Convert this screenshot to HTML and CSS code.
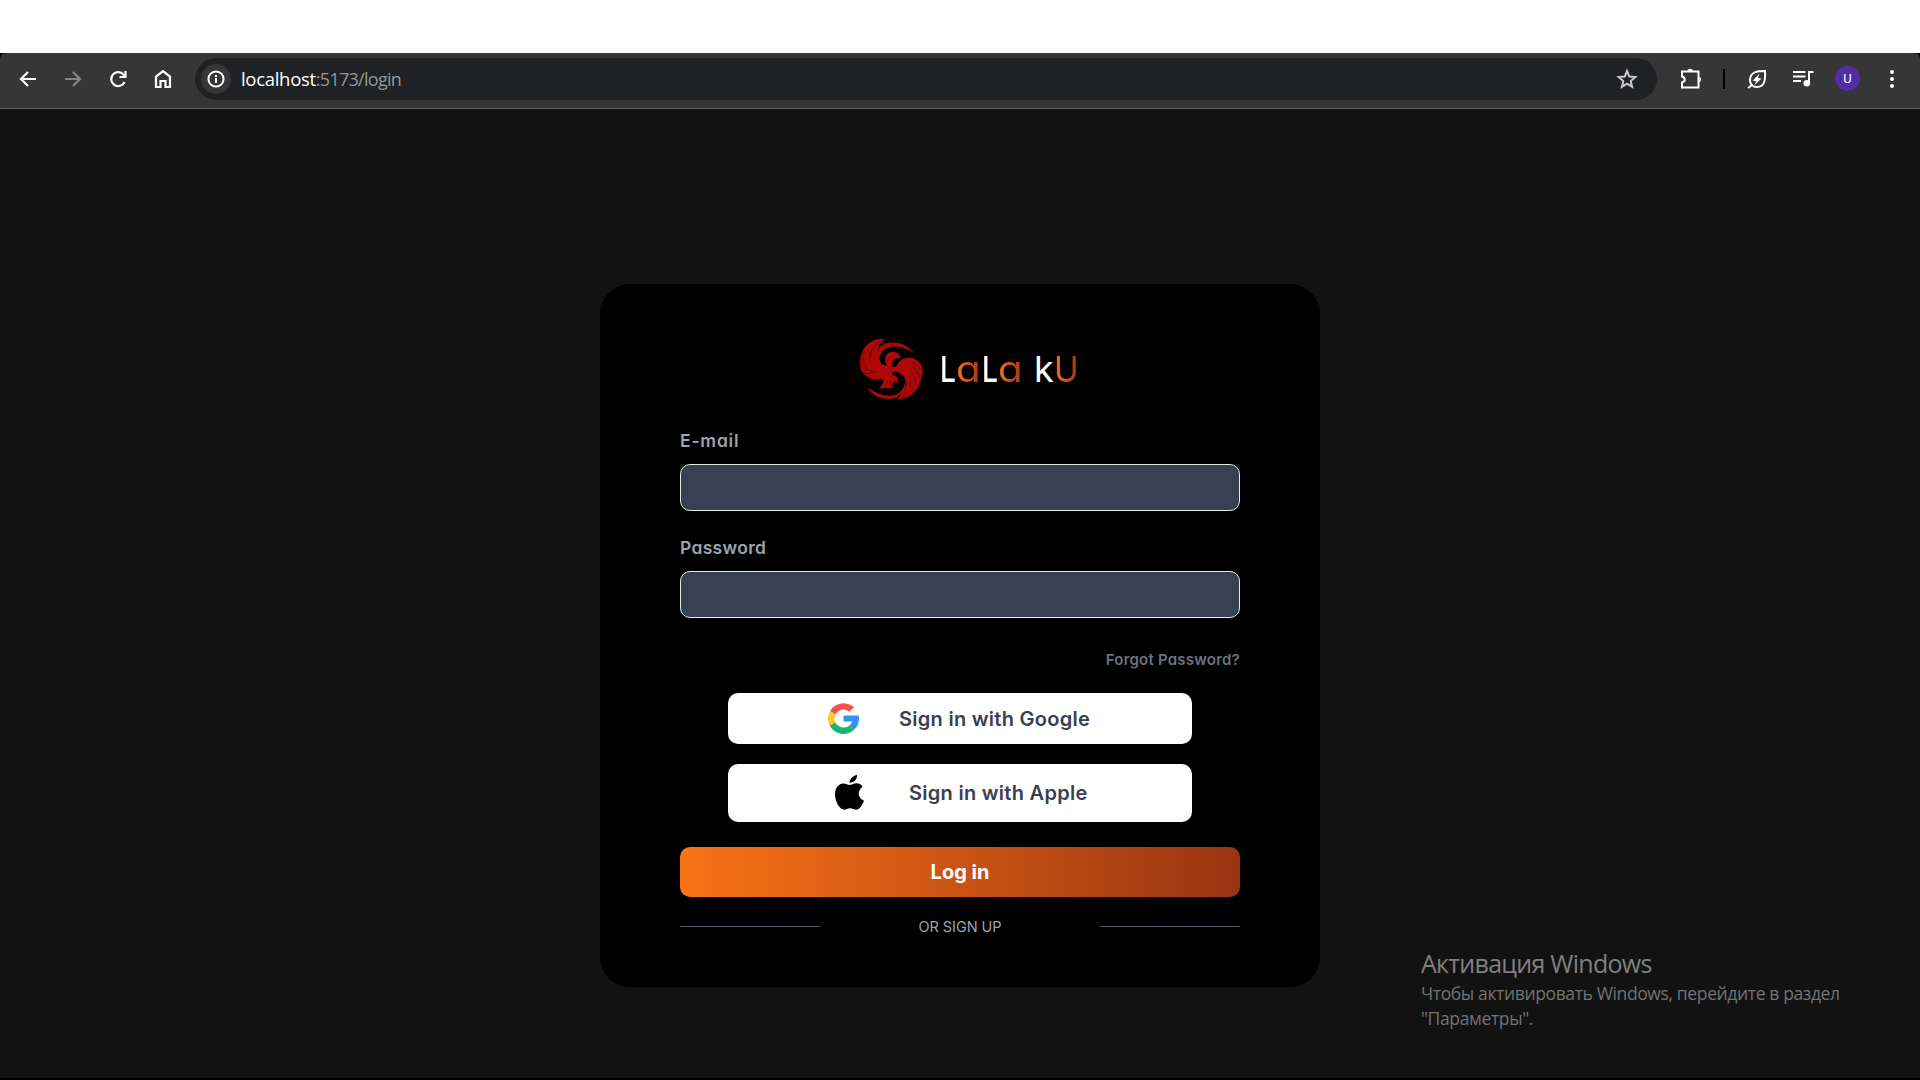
FILE: index.html
```html
<!DOCTYPE html>
<html lang="en">
<head>
<meta charset="utf-8">
<title>Login</title>
<link rel="stylesheet" href="styles.css">
</head>
<body>
<div class="window">
  <header class="toolbar">
    <nav class="nav">
      <svg class="icon" viewBox="0 0 24 24"><path d="M20 12H5M12 5l-7 7 7 7"/></svg>
      <svg class="icon dim" viewBox="0 0 24 24"><path d="M4 12h15M12 5l7 7-7 7"/></svg>
      <svg class="icon" viewBox="0 0 24 24"><path d="M18.6 15A7 7 0 1 1 17.5 7.500L19 9M19.500 4v6h-6"/></svg>
      <svg class="icon" viewBox="0 0 24 24"><path d="M5 20V9.500L12 4.200l7 5.300V20h-4.500v-6h-5v6z"/></svg>
    </nav>
    <div class="address">
      <span class="info"><svg viewBox="0 0 20 20"><circle cx="10" cy="10" r="7.600"/><path d="M10 9v5M10 6v2"/></svg></span>
      <span class="url"><b>localhost</b>:5173/login</span>
      <svg class="star" viewBox="0 0 24 24"><path d="M12 4l2.300 5.600 6 .5-4.600 3.900 1.400 5.900-5.100-3.200-5.100 3.200L8.300 14 3.700 10.100l6-.5z"/></svg>
    </div>
    <div class="tools">
      <svg class="puzzle" viewBox="0 0 24 24"><path d="M4 4.500h16.500v16H4v-5c3.600-1 3.600-5 0-6z"/><path class="solid" d="M9.500 4.500a2.700 2.700 0 0 1 5.400 0zM20.500 10a2.600 2.600 0 0 1 0 5.200z"/></svg>
      <span class="divider"></span>
      <svg class="leaf" viewBox="0 0 24 24"><path d="M20 4c-7 0-15 .5-15 9a6.500 6.500 0 0 0 7 7c8 0 8.500-8 8-16zM3 21l4-3"/><path class="solid" d="M14.800 6.500L7.500 13.500l3.700.7-2 4.300L16.500 11.500l-3.700-.7z"/></svg>
      <svg class="queue" viewBox="0 0 24 24"><path d="M2 5h12.500M2 9.500h12.500M2 14h8M18 17V5h4.500"/><circle class="solid" cx="15.800" cy="16.200" r="3.300"/></svg>
      <span class="avatar">U</span>
      <span class="menu"><i></i><i></i><i></i></span>
    </div>
  </header>
  <main class="page">
    <form class="card">
      <div class="brand">
        <svg class="logo" viewBox="27 21 192 189">
          <path d="M104 24C60 20 32 50 30 92c-1 18 4 30 14 39 12 12 30 17 48 13 8 0 10 2 8 8-2 8-6 12-13 20 10 2 14 0 20-2 8 4 16 2 22-2-2-8-2-14 6-18 4 4 8 6 11 6-2-8-3-14-6-20-10-2-16-6-13-11 8-4 14-1 22 1 14 8 18 16 18 26-4 14-10 24-20 34-22 14-54 12-95-17 16 30 50 40 84 32 6-3 12-8 16-12-2 8-6 13-12 17 32-2 58-18 70-50 6-14 10-30 7-44-5-22-22-33-42-32-22 1-30 14-37 28-12 2-13-5-10-15 3-11 11-14 24-11-2-14-13-20-25-19-16 1-23 12-21 26 1 6 4 9 3 15-12-2-20-9-20-20 0-18 10-28 24-34 24-6 52-4 80 17-20-28-54-38-84-30-10 3-18 8-24 15 2-12 8-20 22-28z"/>
          <g class="cuts">
            <path d="M91 30C70 42 60 58 62 80M75 44C62 58 56 72 58 88M43 62c-6 16-4 29 7 43M33 82c0 14 6 23 18 30M31 103c8 12 22 16 37 15M40 126c12 3 26 1 39-4"/>
            <path d="M116 32c-8 5-12 10-15 17M94 42c-6 6-9 11-9 19M134 33c-5 3-8 7-10 12M102 168c5-5 9-10 11-16M121 165c2-6 2-10 1-15"/>
            <path d="M188 93c10 5 17 13 21 23M184 105c10 6 17 14 20 26M183 125c8 8 11 18 10 30M178 136c5 10 6 20 2 32M169 155c1 11-3 23-8 34M198 140c2 14-4 28-14 41M207 127c5 10 4 20 1 31M173 185c-5 8-12 14-20 19"/>
            <path d="M139 174c-6 8-13 14-23 17M151 170c-3 9-9 17-17 24"/>
          </g>
        </svg>
        <div class="wordmark"><span class="l">L</span><span class="glow a">a</span><span class="l">L</span><span class="glow a last">a</span><span class="k">k</span><span class="glow u">U</span></div>
      </div>
      <label class="label first" for="email">E-mail</label>
      <input class="field" id="email" type="email">
      <label class="label second" for="password">Password</label>
      <input class="field" id="password" type="password">
      <a class="forgot">Forgot Password?</a>
      <button class="social google" type="button">
        <svg viewBox="0 0 48 48"><path fill="#f65249" d="M3.200 12.500A24 24 0 0 1 40.300 6.700L33 13.400A14 14 0 0 0 11.500 18z"/><path fill="#ffc930" d="M3.200 12.500A24 24 0 0 0 2.600 34.800L11.300 30a14 14 0 0 1 .2-12z"/><path fill="#1cb66a" d="M2.600 34.800A24 24 0 0 0 40.800 41.100L33 34.700A14 14 0 0 1 11.300 30z"/><path fill="#2f96f3" d="M24 19.300h23.600C49 28 46.500 36 40.800 41.100L33 34.700c2.200-1.600 3.600-3.400 4.400-6H24z"/></svg>
        <span>Sign in with Google</span>
      </button>
      <button class="social apple" type="button">
        <svg viewBox="0 0 29 35"><path d="M22 0c.5 4-3 8-7.300 7.700C14.500 4 18 .5 22 0zM14.500 10c2 0 3.700-1.800 7-1.800 2.600 0 5 1.400 6.300 3.500-6 3.700-5 11.500 1.200 14-1.500 4-4.500 9-7.800 9-2.300 0-3.200-1.500-6-1.500s-3.800 1.500-6 1.500C5 34.700 0 27 0 19.500 0 12.500 4 8.500 8.300 8.500c2.700 0 4.700 1.500 6.200 1.500z"/></svg>
        <span>Sign in with Apple</span>
      </button>
      <button class="submit" type="button">Log in</button>
      <div class="signup"><span class="rule"></span><span class="or">OR SIGN UP</span><span class="rule"></span></div>
    </form>
    <aside class="watermark">
      <h2>Активация Windows</h2>
      <p>Чтобы активировать Windows, перейдите в раздел<br>"Параметры".</p>
    </aside>
  </main>
</div>
</body>
</html>
```
FILE: styles.css
```css
* { box-sizing: border-box; }
body { margin: 0; padding-top: 53px; height: 1080px; background: #fff; overflow: hidden; font-family: Inter, sans-serif; font-feature-settings: "cv11"; }
.window { height: 1027px; background: #000; }
.toolbar { height: 56px; display: flex; align-items: center; padding: 0 15px 4px 16px; background: #363636; border-bottom: 1px solid #606060; border-radius: 6px 6px 0 0; }
svg { display: block; fill: none; stroke: #fff; stroke-width: 2; flex: none; }
.solid { fill: #fff; stroke: none; }
.nav { display: flex; gap: 21px; width: 179px; }
.icon { width: 24px; height: 24px; stroke-width: 2.200; }
.dim { stroke: #858585; }
.address { width: 1462px; height: 42px; border-radius: 21px; background: #202124; display: flex; align-items: center; padding: 0 18px 0 6px; }
.info { width: 30px; height: 30px; border-radius: 50%; background: #363636; display: grid; place-items: center; }
.info svg { width: 20px; height: 20px; }
.url { flex: 1; margin-left: 10px; font: 18.500px/24px "Open Sans", sans-serif; letter-spacing: -0.720px; color: #93969a; font-size: 18px; }
.url b { font-weight: 400; font-size: 18.500px; letter-spacing: -0.300px; color: #fff; }
.star { width: 24px; height: 24px; stroke: #c7c7c7; }
.tools { display: flex; align-items: center; }
.puzzle { width: 24px; height: 24px; margin-left: 21px; }
.divider { width: 2px; height: 20px; background: #000; margin-left: 21px; }
.leaf { width: 24px; height: 24px; margin-left: 20px; }
.queue { width: 24px; height: 24px; margin-left: 22px; }
.avatar { width: 25px; height: 25px; border-radius: 50%; background: #512da8; color: #fff; font: 13px/26px Roboto, sans-serif; text-align: center; margin-left: 20px; }
.menu { display: flex; flex-direction: column; gap: 3px; margin-left: 30px; }
.menu i { width: 4px; height: 4px; border-radius: 50%; background: #fff; }
.page { position: relative; height: 969px; background: #121212; padding-top: 175px; }
.card { width: 720px; height: 703px; margin: 0 auto; padding: 54px 80px 0; background: #000; border-radius: 30px; display: flex; flex-direction: column; }
.brand { height: 62px; display: flex; align-items: center; padding-left: 179px; }
.logo { width: 64px; height: 63px; fill: #ae0808; stroke: none; }
.cuts { fill: none; stroke: #200101; stroke-width: 1.300; stroke-linecap: round; }
.wordmark { display: flex; margin-left: 17px; font-size: 36px; line-height: 54px; color: #fff; }
.wordmark span { width: 20px; transform-origin: 0 50%; }
.wordmark .l { width: 21px; margin-right: -5px; font-weight: 500; transform: scaleX(0.780); }
.wordmark .glow { background: linear-gradient(90deg, #f97316, #9a3412); background-clip: text; -webkit-background-clip: text; color: transparent; }
.wordmark .a { width: 23px; margin-right: 3px; transform: scaleX(1.120); }
.wordmark .last { margin-right: 13px; }
.wordmark .u { width: 27px; font-weight: 400; transform: scaleX(0.920); }
.label { margin-top: 29px; height: 24px; font-size: 17.500px; line-height: 24px; font-weight: 600; letter-spacing: 0.300px; color: #9ca3af; }
.label.first { letter-spacing: 0.800px; }
.label.second { margin-top: 25px; }
.field { width: 560px; height: 47px; margin: 11px 0 0; border: 1px solid #e5e7eb; border-radius: 10px; background: #374151; outline: 0; }
.forgot { margin-top: 32px; height: 20px; align-self: flex-end; font-size: 15px; line-height: 20px; font-weight: 600; letter-spacing: 0.220px; color: #6b7280; white-space: nowrap; }
.social { width: 464px; height: 51px; margin: 23px 48px 0; padding: 0; border: 0; border-radius: 10px; background: #fff; display: flex; align-items: center; font: 600 20px/28px Inter, sans-serif; font-feature-settings: "cv11"; letter-spacing: 0.280px; color: #374151; white-space: nowrap; }
.social svg { stroke: none; }
.google svg { width: 31px; height: 31px; margin: 0 40px 0 100px; }
.apple { height: 58px; margin-top: 20px; }
.apple svg { width: 29px; height: 35px; margin: 0 45px 2px 107px; fill: #000; }
.submit { height: 50px; margin-top: 25px; border: 0; border-radius: 10px; background: linear-gradient(90deg, #f97316, #9a3412); color: #fff; font: 700 20px/28px Inter, sans-serif; font-feature-settings: "cv11"; }
.signup { margin-top: 19px; height: 21px; display: flex; align-items: center; justify-content: space-between; }
.rule { width: 140px; height: 1px; background: #4b5563; }
.or { font-size: 14.500px; line-height: 21px; letter-spacing: -0.080px; color: #9ca3af; white-space: nowrap; }
.watermark { position: absolute; left: 1421px; top: 837px; font-family: "Open Sans", sans-serif; color: #737373; white-space: nowrap; }
.watermark h2 { margin: 0; font-size: 25px; line-height: 35px; font-weight: 400; letter-spacing: -0.720px; color: #808080; }
.watermark p { margin: 0; font-size: 17.500px; line-height: 25px; letter-spacing: -0.370px; }
```
